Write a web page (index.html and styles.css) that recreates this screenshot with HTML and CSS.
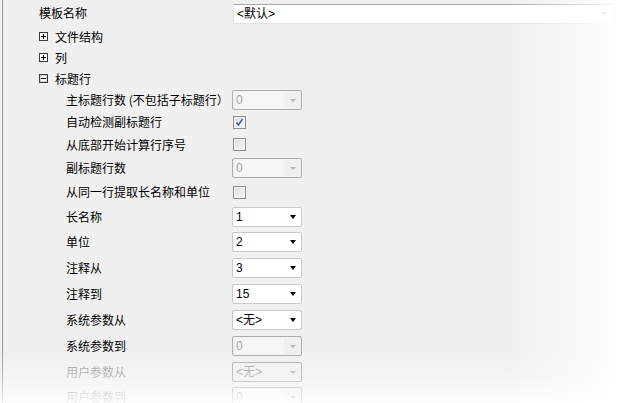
FILE: index.html
```html
<!DOCTYPE html>
<html lang="zh-CN">
<head>
<meta charset="utf-8">
<title>标题行</title>
<link rel="stylesheet" href="styles.css">
</head>
<body>
<div class="panel">
  <div class="row h26 top">
    <span class="label">模板名称</span>
    <div class="combo wide">
      <span class="val">&lt;默认&gt;</span>
      <span class="arrow light"></span>
    </div>
  </div>

  <div class="row h21 top">
    <svg class="tree" width="9" height="9" viewBox="0 0 9 9"><rect x="0.5" y="0.5" width="8" height="8" fill="#fff" stroke="#3c3c3c"/><path d="M2 4.5H7M4.5 2V7" stroke="#000"/></svg>
    <span class="tlabel">文件结构</span>
  </div>
  <div class="row h21 top">
    <svg class="tree" width="9" height="9" viewBox="0 0 9 9"><rect x="0.5" y="0.5" width="8" height="8" fill="#fff" stroke="#3c3c3c"/><path d="M2 4.5H7M4.5 2V7" stroke="#000"/></svg>
    <span class="tlabel">列</span>
  </div>
  <div class="row h21 top">
    <svg class="tree" width="9" height="9" viewBox="0 0 9 9"><rect x="0.5" y="0.5" width="8" height="8" fill="#fff" stroke="#3c3c3c"/><rect x="1.5" y="1.5" width="6" height="6" fill="none" stroke="#9a9a9a" stroke-dasharray="1 1"/><path d="M2 4.5H7" stroke="#000"/></svg>
    <span class="tlabel">标题行</span>
  </div>

  <div class="row h22 sub">
    <span class="label">主标题行数 (不包括子标题行）</span>
    <div class="combo small disabled"><span class="val">0</span><span class="arrow"></span></div>
  </div>
  <div class="row h22 sub">
    <span class="label">自动检测副标题行</span>
    <span class="check on"><svg width="11" height="11" viewBox="0 0 11 11"><path d="M2.5 5.5L4.5 8L8.5 2" fill="none" stroke="#3b5aa8" stroke-width="1.5"/></svg></span>
  </div>
  <div class="row h23 sub">
    <span class="label">从底部开始计算行序号</span>
    <span class="check"></span>
  </div>
  <div class="row h24 sub">
    <span class="label">副标题行数</span>
    <div class="combo small disabled"><span class="val">0</span><span class="arrow"></span></div>
  </div>
  <div class="row h24 sub">
    <span class="label">从同一行提取长名称和单位</span>
    <span class="check"></span>
  </div>
  <div class="row h25 sub">
    <span class="label">长名称</span>
    <div class="combo small"><span class="val">1</span><span class="arrow"></span></div>
  </div>
  <div class="row h26 sub">
    <span class="label">单位</span>
    <div class="combo small"><span class="val">2</span><span class="arrow"></span></div>
  </div>
  <div class="row h26 sub">
    <span class="label">注释从</span>
    <div class="combo small"><span class="val">3</span><span class="arrow"></span></div>
  </div>
  <div class="row h26 sub">
    <span class="label">注释到</span>
    <div class="combo small"><span class="val">15</span><span class="arrow"></span></div>
  </div>
  <div class="row h26 sub">
    <span class="label">系统参数从</span>
    <div class="combo small"><span class="val">&lt;无&gt;</span><span class="arrow"></span></div>
  </div>
  <div class="row h26 sub">
    <span class="label">系统参数到</span>
    <div class="combo small disabled"><span class="val">0</span><span class="arrow"></span></div>
  </div>
  <div class="row h26 sub">
    <span class="label dim">用户参数从</span>
    <div class="combo small disabled plain"><span class="val">&lt;无&gt;</span><span class="arrow"></span></div>
  </div>
  <div class="row h24 sub">
    <span class="label dim">用户参数到</span>
    <div class="combo small disabled"><span class="val">0</span><span class="arrow"></span></div>
  </div>
</div>
<div class="fade-right"></div>
<div class="fade-bottom"></div>
</body>
</html>
```

FILE: styles.css
```css
html, body {
  margin: 0;
  padding: 0;
  width: 620px;
  height: 403px;
  overflow: hidden;
  background: #f0f0f0;
  font-family: "Noto Sans CJK SC", "Liberation Sans", sans-serif;
  font-size: 12px;
  color: #000;
}

.panel {
  margin-left: 2px;
  border-left: 1px solid #9a9a9a;
  height: 403px;
  display: flex;
  flex-direction: column;
}

.row {
  display: flex;
  align-items: center;
  flex: none;
}
.h21 { height: 21px; }
.h22 { height: 22px; }
.h23 { height: 23px; }
.h24 { height: 24px; }
.h25 { height: 25px; }
.h26 { height: 26px; }

.top { padding-left: 36px; }
.top .label { width: 194px; }
.sub { padding-left: 63px; }
.sub .label { width: 167px; }

.label {
  line-height: 14px;
  white-space: nowrap;
}
.label.dim { color: #a0a0a0; }

.tree {
  display: block;
  margin-right: 7px;
}
.tlabel { line-height: 14px; }

.combo {
  box-sizing: border-box;
  display: flex;
  align-items: center;
  background: #fff;
  border: 1px solid #c9c9c9;
  border-radius: 2px;
}
.combo.small { width: 70px; height: 20px; margin-left: -1px; }
.combo.wide {
  width: 380px;
  height: 20px;
  margin-top: 1px;
  border-color: #e2e2e2;
  border-top: 1px solid #a8a8a8;
  border-radius: 1px;
}
.combo .val {
  flex: 1;
  padding-left: 3px;
  font-family: "Liberation Sans", "Noto Sans CJK SC", sans-serif;
  font-size: 12px;
  line-height: 14px;
}

.arrow {
  width: 0;
  height: 0;
  border-left: 3.5px solid transparent;
  border-right: 3.5px solid transparent;
  border-top: 4px solid #000;
  margin-right: 5px;
}
.arrow.light {
  border-top: 4px solid #b8b8b8;
}

.combo.disabled {
  background: #f0f0f0;
  border-color: #abafb2;
}
.combo.disabled .val {
  flex: none;
  width: 48px;
  margin-left: 2px;
  padding-left: 1px;
  background: #f6f6f6;
  color: #a3a3a3;
  height: 16px;
  line-height: 16px;
}
.combo.disabled.plain .val { background: transparent; }
.combo.disabled .arrow {
  margin-left: auto;
  border-top-color: #b3b3b3;
  border-left-width: 3px;
  border-right-width: 3px;
  border-top-width: 3px;
}

.check {
  box-sizing: border-box;
  width: 13px;
  height: 13px;
  border: 1px solid #8e8f8f;
  background: linear-gradient(135deg, #dcdcdc 0%, #eeeeee 60%, #fafafa 100%);
  box-shadow: inset 0 0 0 1px #f4f4f4;
  display: flex;
  align-items: center;
  justify-content: center;
}
.check svg { display: block; }

.fade-right {
  position: absolute;
  top: 0;
  right: 0;
  width: 110px;
  height: 403px;
  background: linear-gradient(to right, rgba(255,255,255,0) 0%, rgba(255,255,255,0.5) 55%, rgba(255,255,255,0.95) 100%);
  pointer-events: none;
}
.fade-bottom {
  position: absolute;
  left: 0;
  bottom: 0;
  width: 620px;
  height: 50px;
  background: linear-gradient(to bottom, rgba(255,255,255,0) 0%, rgba(255,255,255,0.3) 50%, rgba(255,255,255,0.85) 100%);
  pointer-events: none;
}
```
